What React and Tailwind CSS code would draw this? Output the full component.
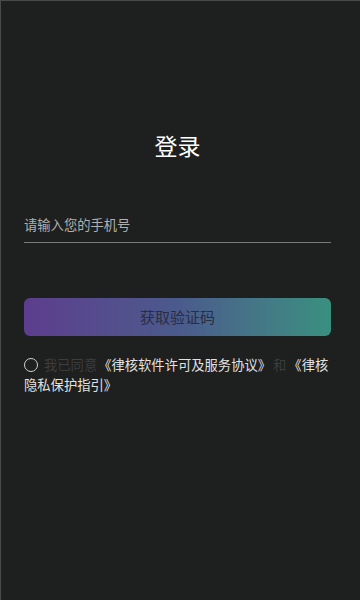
import React, { useState } from 'react';

/**
 * LoginPage
 * - phone number input
 * - get code button with gradient
 * - agreement checkbox + links
 */
export default function App() {
  const [phone, setPhone] = useState('');
  const [agreed, setAgreed] = useState(false);

  return (
    <div
      className="min-h-[600px] w-full bg-[#1e1f1f] border-t border-l border-[#4a4a4a] pl-[23px] pr-[29px] pt-[128px]"
      style={{ fontFamily: '"Noto Sans CJK SC", "Noto Sans", sans-serif' }}
    >
      <h1 className="text-center text-[23px] leading-[32px] text-white">登录</h1>

      <div className="mt-[50px] border-b border-[#7a7a7a] pb-[7px]">
        <input
          className="w-full bg-transparent text-[13.3px] leading-[20px] text-[#e0e0e0] placeholder-[#b0b0b0] outline-none"
          placeholder="请输入您的手机号"
          value={phone}
          onChange={e => setPhone(e.target.value)}
        />
      </div>

      <button
        type="button"
        className="mt-[55px] flex h-[38px] w-full items-center justify-center rounded-[6px] bg-gradient-to-r from-[#5d3d8e] via-[#4a5a8c] to-[#39907f] text-[15px] text-[#2a2d44]"
      >
        获取验证码
      </button>

      <p className="mt-[19px] text-[13.3px] leading-[20px] text-[#e2e2e2]">
        <span
          onClick={() => setAgreed(a => !a)}
          className={`mr-[6px] inline-block h-[14px] w-[14px] rounded-full border border-[#cfcfcf] align-[-2px] ${agreed ? 'bg-[#39907f]' : ''}`}
        />
        <span className="mr-[1px] text-[#3d3d3d]">我已同意</span>
        <span>《律核软件许可及服务协议》</span>
        <span className="mx-[2px] text-[#3d3d3d]">和</span>
        <span>《律核隐私保护指引》</span>
      </p>
    </div>
  );
}
